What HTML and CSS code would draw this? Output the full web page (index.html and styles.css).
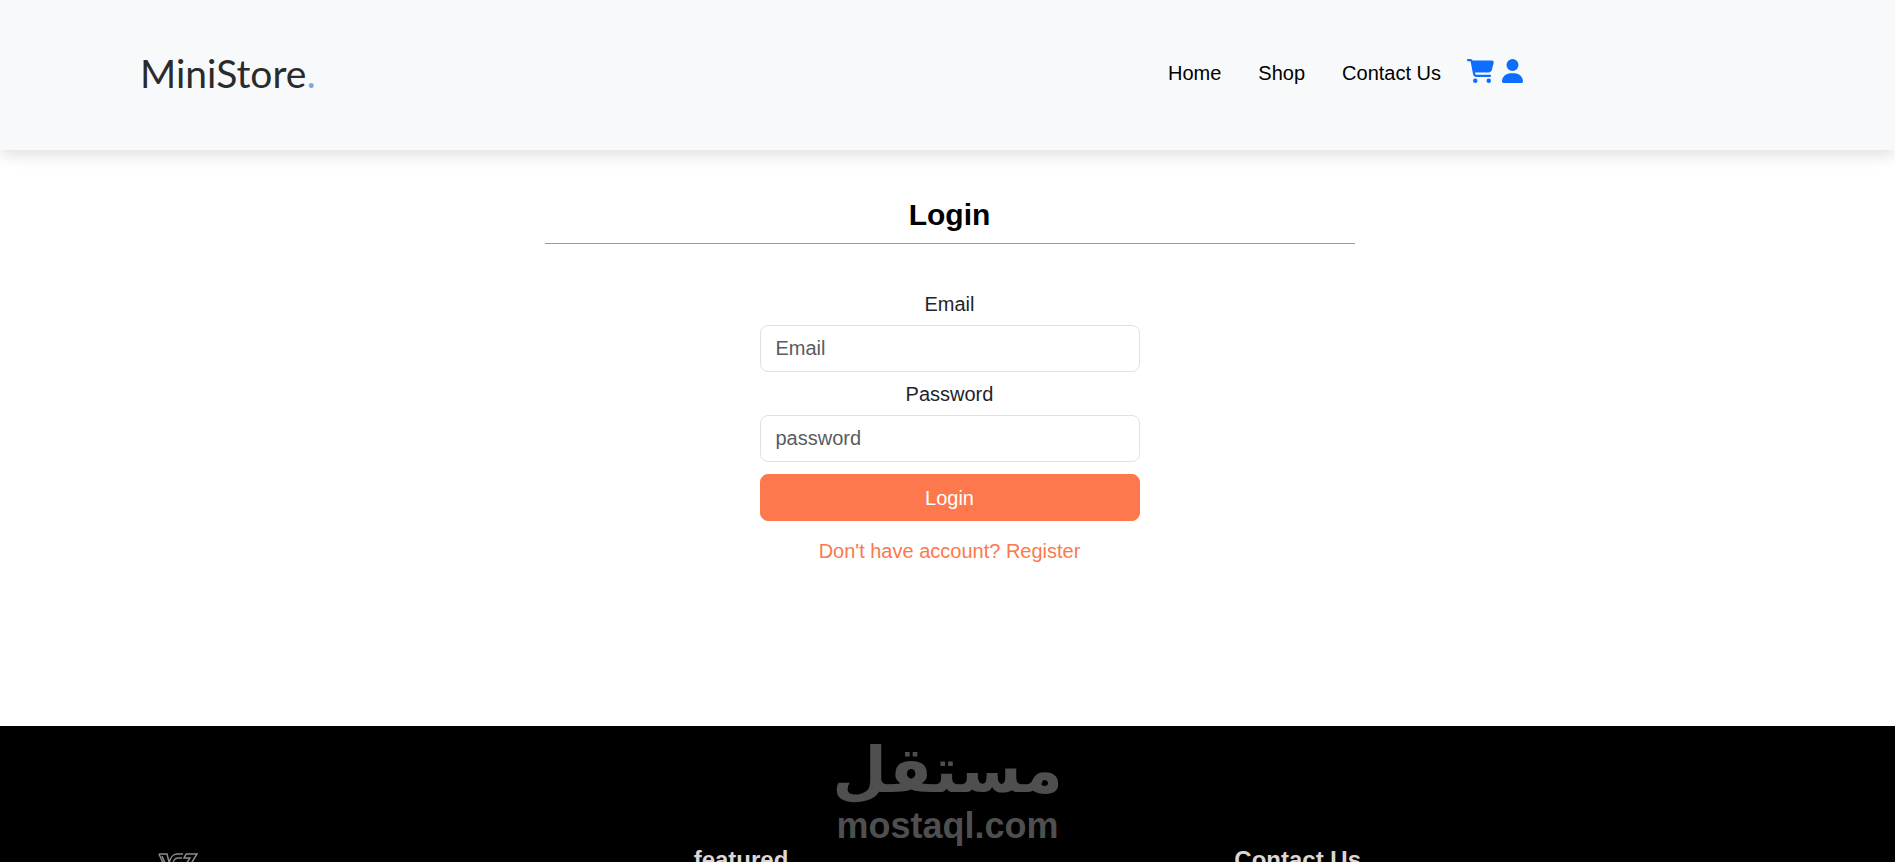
FILE: index.html
```html
<!DOCTYPE html>
<html lang="en">
<head>
    <meta charset="UTF-8">
    <meta name="viewport" content="width=device-width, initial-scale=1.0">
    <title>MiniStore - Login</title>
    <link rel="stylesheet" href="styles.css">
</head>
<body>
    <header class="navbar">
        <a class="logo" href="#">MiniStore<span class="logo-dot">.</span></a>
        <nav class="nav">
            <a class="nav-link" href="#">Home</a>
            <a class="nav-link" href="#">Shop</a>
            <a class="nav-link" href="#">Contact Us</a>
            <div class="nav-icons">
                <a href="#" aria-label="Cart">
                    <svg width="27" height="24" viewBox="0 0 576 512"><path d="M0 24C0 10.700 10.700 0 24 0H69.500c22 0 41.500 12.800 50.600 32h411c26.300 0 45.500 25 38.600 50.400l-41 152.300c-8.500 31.400-37 53.300-69.500 53.300H170.700l5.400 28.500c2.200 11.300 12.100 19.500 23.600 19.500H488c13.300 0 24 10.700 24 24s-10.700 24-24 24H199.700c-34.600 0-64.300-24.600-70.700-58.500L77.400 54.500c-.7-3.800-4-6.500-7.900-6.500H24C10.700 48 0 37.300 0 24zM128 464a48 48 0 1 1 96 0 48 48 0 1 1-96 0zm336-48a48 48 0 1 1 0 96 48 48 0 1 1 0-96z"/></svg>
                </a>
                <a href="#" aria-label="Account">
                    <svg width="21" height="24" viewBox="0 0 448 512"><path d="M224 256a128 128 0 1 0 0-256 128 128 0 1 0 0 256zm-45.700 48C79.800 304 0 383.800 0 482.300 0 498.700 13.300 512 29.700 512h388.600c16.400 0 29.700-13.300 29.700-29.700C448 383.800 368.200 304 269.700 304h-91.400z"/></svg>
                </a>
            </div>
        </nav>
    </header>

    <main class="login">
        <h1 class="login-title">Login</h1>
        <form class="login-form">
            <label for="email">Email</label>
            <input type="email" id="email" placeholder="Email">
            <label for="password">Password</label>
            <input type="password" id="password" placeholder="password">
            <button type="submit">Login</button>
            <a class="register" href="#">Don't have account? Register</a>
        </form>
    </main>

    <footer class="footer">
        <div class="watermark">
            <span class="watermark-ar" lang="ar" dir="rtl">مستقل</span>
            <span class="watermark-en">mostaql.com</span>
        </div>
        <div class="footer-col">
            <svg class="footer-logo" width="48" height="32" viewBox="0 0 48 32" fill="none" stroke="#8c8c8c" stroke-width="1.500"><path d="M6 2h8l2 8M6 2l8 18 3-6M9 4l5 12M30 2h-6c-4 0-7 4-8 9s2 9 6 9 7-3 8-8h-5M29 6h-4c-3 0-5 3-5 7M33 2h11L33 20h10M33 2l-2 4h6L28 20"/></svg>
        </div>
        <div class="footer-col">
            <h2>featured</h2>
        </div>
        <div class="footer-col">
            <h2>Contact Us</h2>
        </div>
    </footer>
</body>
</html>
```

FILE: styles.css
```css
* {
    box-sizing: border-box;
}

body {
    margin: 0;
    font-family: "Liberation Sans", Arial, sans-serif;
    font-size: 20px;
    line-height: 30px;
    color: #212529;
    background: #fff;
}

a {
    text-decoration: none;
}

/* header */
.navbar {
    display: flex;
    align-items: center;
    justify-content: space-between;
    height: 150px;
    padding: 0 372px 4px 140px;
    background: #f8f9fb;
    box-shadow: 0 4px 16px rgba(0, 0, 0, 0.14);
}

.logo {
    font-family: Lato, sans-serif;
    font-size: 39px;
    line-height: 48px;
    color: #2b2b2b;
}

.logo-dot {
    color: #72aee0;
}

.nav {
    display: flex;
    align-items: center;
    gap: 37px;
}

.nav-link {
    color: #000;
}

.nav-icons {
    display: flex;
    gap: 8px;
    margin-left: -11px;
    padding-bottom: 4px;
}

.nav-icons svg {
    display: block;
    fill: #0d6efd;
}

/* login */
.login {
    max-width: 814px;
    margin: 0 auto;
    padding: 45px 0 160px 4px;
}

.login-title {
    margin: 0 0 45px;
    padding-bottom: 8px;
    border-bottom: 1px solid #fd784c;
    font-size: 30px;
    line-height: 40px;
    text-align: center;
    color: #000;
}

.login-form {
    display: flex;
    flex-direction: column;
    max-width: 380px;
    margin: 0 auto;
    text-align: center;
}

.login-form label {
    margin-bottom: 6px;
}

.login-form input,
.login-form button {
    width: 100%;
    height: 47px;
    padding: 8px 15px;
    border: 1px solid #dee2e6;
    border-radius: 8px;
    font: inherit;
    color: #212529;
}

.login-form input {
    margin-bottom: 7px;
}

.login-form input::placeholder {
    color: #595c5f;
    opacity: 1;
}

.login-form button {
    margin: 5px 0 15px;
    border-color: #fd784c;
    background: #fd784c;
    color: #fff;
    cursor: pointer;
}

.register {
    color: #fd784c;
}

/* footer */
.footer {
    position: relative;
    display: grid;
    grid-template-columns: repeat(3, 1fr);
    padding: 120px 120px 60px 153px;
    background: #000;
}

.footer h2 {
    margin: 0;
    font-size: 24px;
    line-height: 28px;
    color: #dcd6d6;
}

.footer-logo {
    display: block;
    margin-top: 6px;
}

.watermark {
    position: absolute;
    top: 8px;
    left: 0;
    right: 0;
    display: flex;
    flex-direction: column;
    align-items: center;
    font-weight: bold;
    color: #4f4f4f;
}

.watermark-ar {
    font-family: "DejaVu Sans", sans-serif;
    font-size: 63px;
    line-height: 74px;
}

.watermark-en {
    font-size: 36px;
    line-height: 36px;
}
```
